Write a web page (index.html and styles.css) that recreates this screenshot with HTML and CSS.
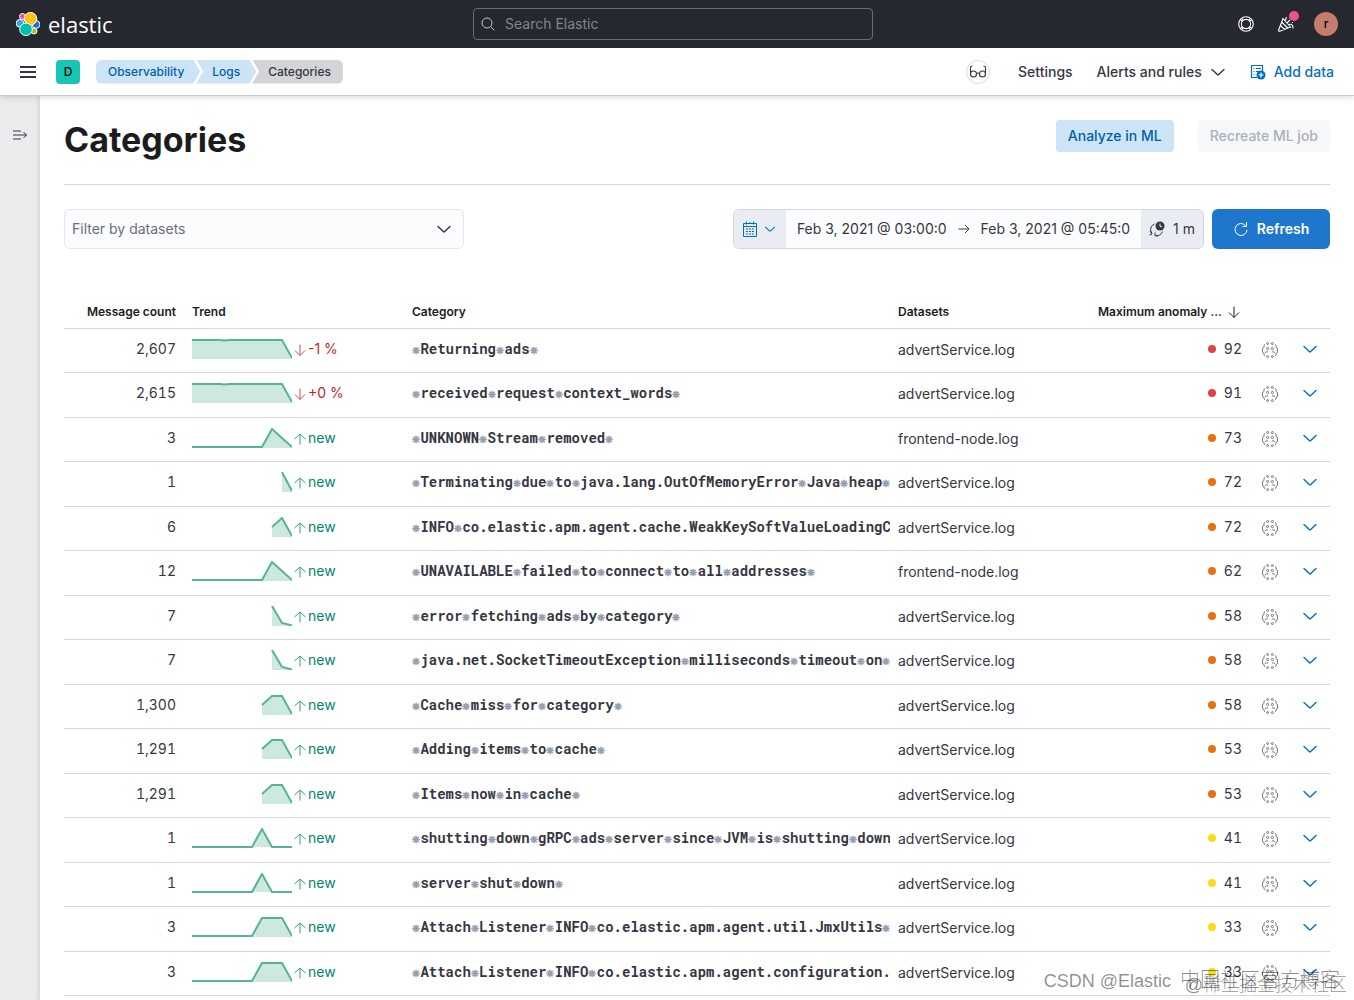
FILE: index.html
```html
<!DOCTYPE html>
<html lang="en">
<head>
<meta charset="utf-8">
<title>Categories - Logs - Observability</title>
<link rel="stylesheet" href="styles.css">
</head>
<body>
<svg class="sprite" aria-hidden="true">
  <symbol id="down" viewBox="0 0 16 16"><path d="M2 5.5l5.3 5.1a1 1 0 0 0 1.4 0L14 5.5" fill="none" stroke="currentColor" stroke-width="1.4" stroke-linecap="round"/></symbol>
  <symbol id="arrow-down" viewBox="0 0 12 12"><path d="M6 .5v11M1 6.5l5 5 5-5" fill="none" stroke="currentColor"/></symbol>
  <symbol id="arrow-up" viewBox="0 0 12 12"><path d="M6 11.5V1M.5 6L6 1l5.500 5" fill="none" stroke="currentColor"/></symbol>
  <symbol id="ml" viewBox="0 0 16 16"><g fill="none" stroke="currentColor" stroke-width=".8"><circle cx="5.600" cy="1.500" r="1"/><circle cx="10.400" cy="1.500" r="1"/><circle cx="5.600" cy="6.500" r="1.100"/><circle cx="10.400" cy="6.500" r="1.100"/><circle cx="5.600" cy="14.600" r="1"/><circle cx="10.400" cy="14.600" r="1"/><path d="M3 2.500l-1 .7v2.300L.5 6.500v4L2 11.500v1.500l1 .7M13 2.500l1 .7v2.300l1.500 1v4L14 11.500v1.500l-1 .7M2.800 10.800l2.300-1.300 1 .8M13.200 10.800l-2.300-1.300-1 .8"/></g></symbol>
  <symbol id="flat" viewBox="0 0 100 20"><path class="area" d="M0 1h90l10 18v1H0z"/><path class="line" d="M0 1h28l4 .5L38 1h52l10 18"/></symbol>
  <symbol id="peak-late" viewBox="0 0 100 20"><path class="area" d="M70 19L80 1l20 18v1H70z"/><path class="line" d="M0 19h70L80 1l20 18"/></symbol>
  <symbol id="fall" viewBox="0 0 100 20"><path class="area" d="M90 1l10 18v1H90z"/><path class="line" d="M90 0l10 19"/></symbol>
  <symbol id="roof" viewBox="0 0 100 20"><path class="area" d="M80 10l10-9 10 18v1H80z"/><path class="line" d="M80 10l10-9 10 18"/></symbol>
  <symbol id="decay" viewBox="0 0 100 20"><path class="area" d="M80 1l10 16 10 2v1H80z"/><path class="line" d="M80 0l10 17 10 2.500"/></symbol>
  <symbol id="block" viewBox="0 0 100 20"><path class="area" d="M70 10l10-9h10l10 18v1H70z"/><path class="line" d="M70 10l10-9h10l10 18"/></symbol>
  <symbol id="peak" viewBox="0 0 100 20"><path class="area" d="M60 19L70 1l10 18z"/><path class="line" d="M0 19h60L70 1l10 18h20"/></symbol>
  <symbol id="plateau" viewBox="0 0 100 20"><path class="area" d="M60 19L70 1h20l10 18v1H60z"/><path class="line" d="M0 19h60L70 1h20l10 18"/></symbol>
</svg>

<header class="topbar">
  <a class="brand" href="#">
    <svg width="24" height="24" viewBox="0 0 24 24" aria-hidden="true"><g stroke="#fff" stroke-width="1"><circle cx="6.500" cy="4.500" r="3" fill="#f04e98"/><circle cx="4" cy="11.300" r="3.900" fill="#36a2ef"/><circle cx="20" cy="12.500" r="3.900" fill="#1f6fd0"/><circle cx="18" cy="19" r="3" fill="#93c90e"/><circle cx="14.500" cy="6.700" r="6.300" fill="#fec514"/><circle cx="10" cy="17.300" r="6.300" fill="#00bfb3"/></g></svg>
    <span>elastic</span>
  </a>
  <label class="search">
    <svg width="14" height="14" viewBox="0 0 14 14" aria-hidden="true"><path d="M9.700 9.700l3.800 3.800M11 6A5 5 0 1 1 1 6a5 5 0 0 1 10 0z" fill="none" stroke="currentColor"/></svg>
    <input type="search" placeholder="Search Elastic" aria-label="Search Elastic">
  </label>
  <div class="top-actions">
    <button type="button" aria-label="Help"><svg width="16" height="16" viewBox="0 0 16 16"><g fill="none" stroke="currentColor" stroke-width="1.100"><circle cx="8" cy="8" r="7.300"/><circle cx="8" cy="8" r="4.600"/><path d="M2.500 3.800l2 1.600M3.800 2.500l1.600 2M13.500 3.800l-2 1.600M12.200 2.500l-1.600 2M2.500 12.200l2-1.600M3.800 13.500l1.600-2M13.500 12.200l-2-1.600M12.200 13.500l-1.600-2"/></g></svg></button>
    <button type="button" class="news" aria-label="News"><svg width="16" height="16" viewBox="0 0 16 16"><path d="M5 2.500L.6 14.200q-.2 1.200 1 1L12.500 11zM3.700 6l6 6M2.500 9.500l4 4M7 4.500c1-1 1.500-2 1-3.500M9 7l3-3M10.500 9c2-1.500 4.500-.5 4.500 2.500v1M12 1v1M14 6.500h1" fill="none" stroke="currentColor" stroke-width="1.100"/></svg></button>
    <button type="button" class="avatar" aria-label="Account">r</button>
  </div>
</header>

<div class="navbar">
  <button type="button" class="menu" aria-label="Menu"><svg width="16" height="12" viewBox="0 0 16 12"><path d="M0 1h16M0 6h16M0 11h16" stroke="currentColor" stroke-width="2"/></svg></button>
  <button type="button" class="space" aria-label="Default space">D</button>
  <nav class="crumbs" aria-label="Breadcrumbs">
    <a href="#">Observability</a><a href="#">Logs</a><span>Categories</span>
  </nav>
  <div class="nav-links">
    <button type="button" class="glasses" aria-label="Read only"><svg width="18" height="14" viewBox="0 0 18 14"><g fill="none" stroke="currentColor" stroke-width="1.100"><circle cx="4.500" cy="9" r="3"/><circle cx="13.500" cy="9" r="3"/><path d="M7.400 8.500q1.600-1 3.200 0M1.500 9V2.500Q1.500 1 3.500 1M16.500 9V2.500Q16.500 1 14.500 1"/></g></svg></button>
    <a href="#">Settings</a>
    <button type="button" class="alerts">Alerts and rules <svg width="16" height="16" aria-hidden="true"><use href="#down"/></svg></button>
    <a href="#" class="add"><svg width="16" height="16" viewBox="0 0 16 16" aria-hidden="true"><path d="M7 13.500H1.500V1.500h11V7M3.500 4.500h1M6 4.500h5M3.500 7.500h1M6 7.500h3M3.500 10.500h1" fill="none" stroke="currentColor" stroke-width="1.200"/><circle cx="11" cy="11" r="4.500" fill="currentColor"/><path d="M11 8.500v5M8.500 11h5" stroke="#fff" stroke-width="1.200"/></svg>Add data</a>
  </div>
</div>

<div class="shell">
  <aside class="rail"><button type="button" aria-label="Expand side navigation"><svg width="16" height="10" viewBox="0 0 16 10"><path d="M1 1h8M1 5h13.500M1 9h8M11.500 2l3 3-3 3" fill="none" stroke="currentColor"/></svg></button></aside>
  <main>
    <div class="page-head">
      <h1>Categories</h1>
      <div class="head-actions">
        <button type="button" class="btn analyze">Analyze in ML</button>
        <button type="button" class="btn recreate" disabled>Recreate ML job</button>
      </div>
    </div>
    <div class="filters">
      <button type="button" class="datasets">Filter by datasets <svg width="16" height="16" aria-hidden="true"><use href="#down"/></svg></button>
      <div class="time">
        <div class="range">
          <button type="button" class="quick" aria-label="Quick select"><svg width="16" height="16" viewBox="0 0 16 16"><path d="M1.500 2.500h13v13h-13zM1.500 5.500h13M4.500.5v3M11.500.5v3M8 1v2" fill="none" stroke="currentColor"/><path d="M4 8h8M4 10.500h8M4 13h8" stroke="currentColor" stroke-width="1.200" stroke-dasharray="2 1"/></svg><svg width="12" height="12"><use href="#down"/></svg></button>
          <button type="button" class="date">Feb 3, 2021 @ 03:00:0</button>
          <svg class="to" width="12" height="12" viewBox="0 0 12 12" aria-hidden="true"><path d="M.5 6h10.500M7 2l4 4-4 4" fill="none" stroke="currentColor"/></svg>
          <button type="button" class="date">Feb 3, 2021 @ 05:45:0</button>
          <button type="button" class="interval"><svg width="16" height="16" viewBox="0 0 16 16" aria-hidden="true"><circle cx="11" cy="5" r="4.500" fill="currentColor"/><path d="M11 2.500V5.500h2" fill="none" stroke="#e9edf3"/><path d="M5.500 3A6 6 0 0 0 3 12.500M1 10l2 3-2.500 1M13.500 10.500A6 6 0 0 1 6 14.500M6 11.500v3l3 .5" fill="none" stroke="currentColor"/></svg>1 m</button>
        </div>
        <button type="button" class="refresh"><svg width="16" height="16" viewBox="0 0 16 16" aria-hidden="true"><path d="M12.500 4.500A6 6 0 1 0 14 9M13.500 1v4.500H9.500" fill="none" stroke="currentColor"/></svg>Refresh</button>
      </div>
    </div>

    <table>
      <colgroup><col class="c-count"><col class="c-trend"><col><col class="c-data"><col class="c-score"><col class="c-act"><col class="c-act"></colgroup>
      <thead><tr><th class="num">Message count</th><th>Trend</th><th>Category</th><th>Datasets</th><th colspan="3"><span class="sorted">Maximum anomaly ... <svg width="12" height="12" aria-label="sorted descending"><use href="#arrow-down"/></svg></span></th></tr></thead>
      <tbody>
      <tr><td class="num">2,607</td><td><div class="trend loss"><svg class="spark"><use href="#flat"/></svg><svg class="dir"><use href="#arrow-down"/></svg>-1 %</div></td><td class="cat"><i>⁕</i>Returning<i>⁕</i>ads<i>⁕</i></td><td class="low">advertService.log</td><td><div class="score critical">92</div></td><td class="low"><button type="button" aria-label="Analyze in ML"><svg><use href="#ml"/></svg></button></td><td><button type="button" class="expand" aria-label="Expand"><svg><use href="#down"/></svg></button></td></tr>
      <tr><td class="num">2,615</td><td><div class="trend loss"><svg class="spark"><use href="#flat"/></svg><svg class="dir"><use href="#arrow-down"/></svg>+0 %</div></td><td class="cat"><i>⁕</i>received<i>⁕</i>request<i>⁕</i>context_words<i>⁕</i></td><td class="low">advertService.log</td><td><div class="score critical">91</div></td><td class="low"><button type="button" aria-label="Analyze in ML"><svg><use href="#ml"/></svg></button></td><td><button type="button" class="expand" aria-label="Expand"><svg><use href="#down"/></svg></button></td></tr>
      <tr><td class="num">3</td><td><div class="trend"><svg class="spark"><use href="#peak-late"/></svg><svg class="dir"><use href="#arrow-up"/></svg>new</div></td><td class="cat"><i>⁕</i>UNKNOWN<i>⁕</i>Stream<i>⁕</i>removed<i>⁕</i></td><td class="low">frontend-node.log</td><td><div class="score major">73</div></td><td class="low"><button type="button" aria-label="Analyze in ML"><svg><use href="#ml"/></svg></button></td><td><button type="button" class="expand" aria-label="Expand"><svg><use href="#down"/></svg></button></td></tr>
      <tr><td class="num">1</td><td><div class="trend"><svg class="spark"><use href="#fall"/></svg><svg class="dir"><use href="#arrow-up"/></svg>new</div></td><td class="cat"><i>⁕</i>Terminating<i>⁕</i>due<i>⁕</i>to<i>⁕</i>java.lang.OutOfMemoryError<i>⁕</i>Java<i>⁕</i>heap<i>⁕</i></td><td class="low">advertService.log</td><td><div class="score major">72</div></td><td class="low"><button type="button" aria-label="Analyze in ML"><svg><use href="#ml"/></svg></button></td><td><button type="button" class="expand" aria-label="Expand"><svg><use href="#down"/></svg></button></td></tr>
      <tr><td class="num">6</td><td><div class="trend"><svg class="spark"><use href="#roof"/></svg><svg class="dir"><use href="#arrow-up"/></svg>new</div></td><td class="cat"><i>⁕</i>INFO<i>⁕</i>co.elastic.apm.agent.cache.WeakKeySoftValueLoadingC</td><td class="low">advertService.log</td><td><div class="score major">72</div></td><td class="low"><button type="button" aria-label="Analyze in ML"><svg><use href="#ml"/></svg></button></td><td><button type="button" class="expand" aria-label="Expand"><svg><use href="#down"/></svg></button></td></tr>
      <tr><td class="num">12</td><td><div class="trend"><svg class="spark"><use href="#peak-late"/></svg><svg class="dir"><use href="#arrow-up"/></svg>new</div></td><td class="cat"><i>⁕</i>UNAVAILABLE<i>⁕</i>failed<i>⁕</i>to<i>⁕</i>connect<i>⁕</i>to<i>⁕</i>all<i>⁕</i>addresses<i>⁕</i></td><td class="low">frontend-node.log</td><td><div class="score major">62</div></td><td class="low"><button type="button" aria-label="Analyze in ML"><svg><use href="#ml"/></svg></button></td><td><button type="button" class="expand" aria-label="Expand"><svg><use href="#down"/></svg></button></td></tr>
      <tr><td class="num">7</td><td><div class="trend"><svg class="spark"><use href="#decay"/></svg><svg class="dir"><use href="#arrow-up"/></svg>new</div></td><td class="cat"><i>⁕</i>error<i>⁕</i>fetching<i>⁕</i>ads<i>⁕</i>by<i>⁕</i>category<i>⁕</i></td><td class="low">advertService.log</td><td><div class="score major">58</div></td><td class="low"><button type="button" aria-label="Analyze in ML"><svg><use href="#ml"/></svg></button></td><td><button type="button" class="expand" aria-label="Expand"><svg><use href="#down"/></svg></button></td></tr>
      <tr><td class="num">7</td><td><div class="trend"><svg class="spark"><use href="#decay"/></svg><svg class="dir"><use href="#arrow-up"/></svg>new</div></td><td class="cat"><i>⁕</i>java.net.SocketTimeoutException<i>⁕</i>milliseconds<i>⁕</i>timeout<i>⁕</i>on<i>⁕</i></td><td class="low">advertService.log</td><td><div class="score major">58</div></td><td class="low"><button type="button" aria-label="Analyze in ML"><svg><use href="#ml"/></svg></button></td><td><button type="button" class="expand" aria-label="Expand"><svg><use href="#down"/></svg></button></td></tr>
      <tr><td class="num">1,300</td><td><div class="trend"><svg class="spark"><use href="#block"/></svg><svg class="dir"><use href="#arrow-up"/></svg>new</div></td><td class="cat"><i>⁕</i>Cache<i>⁕</i>miss<i>⁕</i>for<i>⁕</i>category<i>⁕</i></td><td class="low">advertService.log</td><td><div class="score major">58</div></td><td class="low"><button type="button" aria-label="Analyze in ML"><svg><use href="#ml"/></svg></button></td><td><button type="button" class="expand" aria-label="Expand"><svg><use href="#down"/></svg></button></td></tr>
      <tr><td class="num">1,291</td><td><div class="trend"><svg class="spark"><use href="#block"/></svg><svg class="dir"><use href="#arrow-up"/></svg>new</div></td><td class="cat"><i>⁕</i>Adding<i>⁕</i>items<i>⁕</i>to<i>⁕</i>cache<i>⁕</i></td><td class="low">advertService.log</td><td><div class="score major">53</div></td><td class="low"><button type="button" aria-label="Analyze in ML"><svg><use href="#ml"/></svg></button></td><td><button type="button" class="expand" aria-label="Expand"><svg><use href="#down"/></svg></button></td></tr>
      <tr><td class="num">1,291</td><td><div class="trend"><svg class="spark"><use href="#block"/></svg><svg class="dir"><use href="#arrow-up"/></svg>new</div></td><td class="cat"><i>⁕</i>Items<i>⁕</i>now<i>⁕</i>in<i>⁕</i>cache<i>⁕</i></td><td class="low">advertService.log</td><td><div class="score major">53</div></td><td class="low"><button type="button" aria-label="Analyze in ML"><svg><use href="#ml"/></svg></button></td><td><button type="button" class="expand" aria-label="Expand"><svg><use href="#down"/></svg></button></td></tr>
      <tr><td class="num">1</td><td><div class="trend"><svg class="spark"><use href="#peak"/></svg><svg class="dir"><use href="#arrow-up"/></svg>new</div></td><td class="cat"><i>⁕</i>shutting<i>⁕</i>down<i>⁕</i>gRPC<i>⁕</i>ads<i>⁕</i>server<i>⁕</i>since<i>⁕</i>JVM<i>⁕</i>is<i>⁕</i>shutting<i>⁕</i>down</td><td class="low">advertService.log</td><td><div class="score minor">41</div></td><td class="low"><button type="button" aria-label="Analyze in ML"><svg><use href="#ml"/></svg></button></td><td><button type="button" class="expand" aria-label="Expand"><svg><use href="#down"/></svg></button></td></tr>
      <tr><td class="num">1</td><td><div class="trend"><svg class="spark"><use href="#peak"/></svg><svg class="dir"><use href="#arrow-up"/></svg>new</div></td><td class="cat"><i>⁕</i>server<i>⁕</i>shut<i>⁕</i>down<i>⁕</i></td><td class="low">advertService.log</td><td><div class="score minor">41</div></td><td class="low"><button type="button" aria-label="Analyze in ML"><svg><use href="#ml"/></svg></button></td><td><button type="button" class="expand" aria-label="Expand"><svg><use href="#down"/></svg></button></td></tr>
      <tr><td class="num">3</td><td><div class="trend"><svg class="spark"><use href="#plateau"/></svg><svg class="dir"><use href="#arrow-up"/></svg>new</div></td><td class="cat"><i>⁕</i>Attach<i>⁕</i>Listener<i>⁕</i>INFO<i>⁕</i>co.elastic.apm.agent.util.JmxUtils<i>⁕</i></td><td class="low">advertService.log</td><td><div class="score minor">33</div></td><td class="low"><button type="button" aria-label="Analyze in ML"><svg><use href="#ml"/></svg></button></td><td><button type="button" class="expand" aria-label="Expand"><svg><use href="#down"/></svg></button></td></tr>
      <tr><td class="num">3</td><td><div class="trend"><svg class="spark"><use href="#plateau"/></svg><svg class="dir"><use href="#arrow-up"/></svg>new</div></td><td class="cat"><i>⁕</i>Attach<i>⁕</i>Listener<i>⁕</i>INFO<i>⁕</i>co.elastic.apm.agent.configuration.</td><td class="low">advertService.log</td><td><div class="score minor">33</div></td><td class="low"><button type="button" aria-label="Analyze in ML"><svg><use href="#ml"/></svg></button></td><td><button type="button" class="expand" aria-label="Expand"><svg><use href="#down"/></svg></button></td></tr>
      </tbody>
    </table>
  </main>
</div>
<div class="mark author">CSDN @Elastic <span>中国社区官方博客</span></div>
<div class="mark community">@稀土掘金技术社区</div>
</body>
</html>
```
FILE: styles.css
```css
* { box-sizing: border-box; }
body {
  margin: 0;
  position: relative;
  min-height: 100vh;
  display: flex;
  flex-direction: column;
  font: 14px/20px Inter, "Noto Sans CJK SC", sans-serif;
  color: #343741;
  background: #fff;
}
button, input { font: inherit; color: inherit; }
button { border: 0; background: none; padding: 0; display: flex; align-items: center; }
a { color: inherit; text-decoration: none; }
svg { display: block; flex: none; }
.sprite { position: absolute; width: 0; height: 0; }

.topbar {
  height: 48px;
  padding: 0 24px 0 16px;
  display: grid;
  grid-template-columns: 1fr 400px 1fr;
  align-items: center;
  background: #25282f;
  color: #fff;
}
.brand { display: flex; align-items: center; gap: 8px; font: 22px/24px "Open Sans", sans-serif; }
.search {
  display: flex;
  align-items: center;
  gap: 10px;
  height: 32px;
  padding: 0 7px;
  border: 1px solid #6a6d76;
  border-radius: 4px;
}
.search svg { color: #c5c7cc; }
.search input { flex: 1; min-width: 0; border: 0; padding: 0; outline: 0; background: none; }
.search input::placeholder { color: #81858f; opacity: 1; }
.top-actions { justify-self: end; margin-right: -8px; display: flex; align-items: center; gap: 24px; }
.top-actions .avatar {
  width: 24px; height: 24px; margin-left: -4px;
  justify-content: center;
  border-radius: 50%;
  background: #c47c6c;
  color: #000;
  font-size: 12px;
  font-weight: 500;
}
.news { position: relative; }
.news::after {
  content: "";
  position: absolute;
  left: 11px; top: -5px;
  width: 10px; height: 10px;
  border-radius: 50%;
  background: #f04e98;
}

.navbar {
  position: relative;
  z-index: 1;
  height: 48px;
  padding: 0 20px;
  display: flex;
  align-items: center;
  border-bottom: 1px solid #c9cdd3;
  background: #fff;
  box-shadow: 0 2px 6px #0000001f;
}
.menu { margin-right: 20px; }
.space {
  width: 24px; height: 24px; margin-right: 16px;
  justify-content: center;
  border-radius: 4px;
  background: #16c5b4;
  color: #000;
  font-size: 12px;
  font-weight: 500;
}
.crumbs { display: flex; font-size: 12px; line-height: 24px; font-weight: 500; }
.crumbs > * { height: 24px; padding: 0 16px; background: #cce4f5; color: #0061a6; }
.crumbs > * + * { margin-left: -4px; }
.crumbs a:first-child {
  padding-left: 12px;
  border-radius: 6px 0 0 6px;
  clip-path: polygon(0 0, calc(100% - 7px) 0, 100% 50%, calc(100% - 7px) 100%, 0 100%);
}
.crumbs a + a { clip-path: polygon(0 0, calc(100% - 7px) 0, 100% 50%, calc(100% - 7px) 100%, 0 100%, 7px 50%); }
.crumbs span { padding-right: 12px; border-radius: 0 6px 6px 0; background: #d3d4d7; color: #343741; clip-path: polygon(0 0, 100% 0, 100% 100%, 0 100%, 7px 50%); }
.nav-links { margin-left: auto; display: flex; align-items: center; gap: 24px; font-weight: 500; }
.glasses { width: 24px; height: 24px; margin-right: 4px; justify-content: center; border: 1px solid #d3dae6; border-radius: 50%; }
.alerts { gap: 8px; }
.add { display: flex; align-items: center; gap: 8px; color: #0071c2; }

.shell { flex: 1; display: flex; }
.rail { width: 40px; padding: 34px 12px; background: #ebecee; box-shadow: inset -4px 0 5px -3px #0000001f; }
main { flex: 1; min-width: 0; padding: 24px 24px 0; }
.page-head { display: flex; justify-content: space-between; align-items: flex-start; height: 65px; border-bottom: 1px solid #d3d6db; }
h1 { margin: 0; font-size: 34px; line-height: 40px; font-weight: 700; color: #1a1c21; }
.head-actions { display: flex; gap: 24px; }
.btn { height: 32px; padding: 0 12px; border-radius: 4px; font-weight: 500; }
.analyze { background: #cce4f5; color: #0061a6; }
.recreate { background: #f5f7fa; color: #abb0ba; }

.filters { display: flex; justify-content: space-between; margin: 24px 0 46px; }
.datasets {
  width: 400px; height: 40px; padding: 0 11px 0 7px;
  justify-content: space-between;
  border: 1px solid #e3e7ee;
  border-radius: 6px;
  background: #fbfcfd;
  color: #69707d;
}
.datasets svg { color: #343741; }
.time { display: flex; gap: 8px; }
.range { display: flex; align-items: center; height: 40px; border: 1px solid #d3d8e0; border-radius: 6px; overflow: hidden; background: #fbfcfd; }
.range .quick { height: 38px; width: 52px; padding-left: 8px; gap: 6px; background: #e9edf3; color: #0071c2; }
.range .date { height: 38px; padding: 0 11px; }
.interval { height: 38px; padding: 0 8px; gap: 8px; background: #e9edf3; }
.refresh { height: 40px; width: 118px; justify-content: center; gap: 8px; border-radius: 6px; background: #1f76cd; color: #fff; font-weight: 600; }

table { width: 100%; table-layout: fixed; border-collapse: separate; border-spacing: 0; }
.c-count { width: 120px; }
.c-trend { width: 220px; }
.c-data { width: 200px; }
.c-score { width: 160px; }
.c-act { width: 40px; }
th, td { padding: 0 8px; text-align: left; white-space: nowrap; border-bottom: 1px solid #d3d6db; }
th { height: 34px; font-size: 12px; line-height: 18px; font-weight: 600; color: #1a1c21; }
td { height: 44px; padding-bottom: 4px; }
td.low { padding-bottom: 2px; }
tr:nth-child(even) td { height: 45px; }
.num { text-align: right; }
td.num, .score { font-feature-settings: "tnum"; }
.sorted { display: flex; align-items: center; gap: 6px; }
.trend { display: flex; align-items: center; color: #00856f; }
.trend.loss { color: #bd271e; }
.spark { width: 100px; height: 20px; margin-right: 2px; }
.dir { width: 12px; height: 12px; margin: 2px 2px 0 0; opacity: .8; }
.area { fill: #cde9df; }
.line { fill: none; stroke: #54b399; stroke-width: 2; }
td.cat { padding-right: 0; overflow: hidden; font: 700 14px/20px "Roboto Mono", "Liberation Mono", monospace; }
.cat i { display: inline-block; width: 1ch; font-style: normal; color: #98a0ad; }
.score { display: flex; align-items: center; justify-content: flex-end; gap: 8px; }
.score::before { content: ""; width: 8px; height: 8px; border-radius: 50%; }
.critical::before { background: #dd4446; }
.major::before { background: #e7710f; }
.minor::before { background: #fbdc12; }
td button { margin: 0 auto; color: #535966; }
td svg:not([class]) { width: 16px; height: 16px; }
td .expand { color: #0071c2; }

.mark { position: absolute; white-space: nowrap; color: #00000073; font: 300 18px/26px "Liberation Sans", "Noto Sans CJK SC", sans-serif; }
.author { right: 14px; bottom: 6px; }
.author span { margin-left: 4px; font-size: 20px; }
.community { right: 7px; bottom: 2px; }
```
